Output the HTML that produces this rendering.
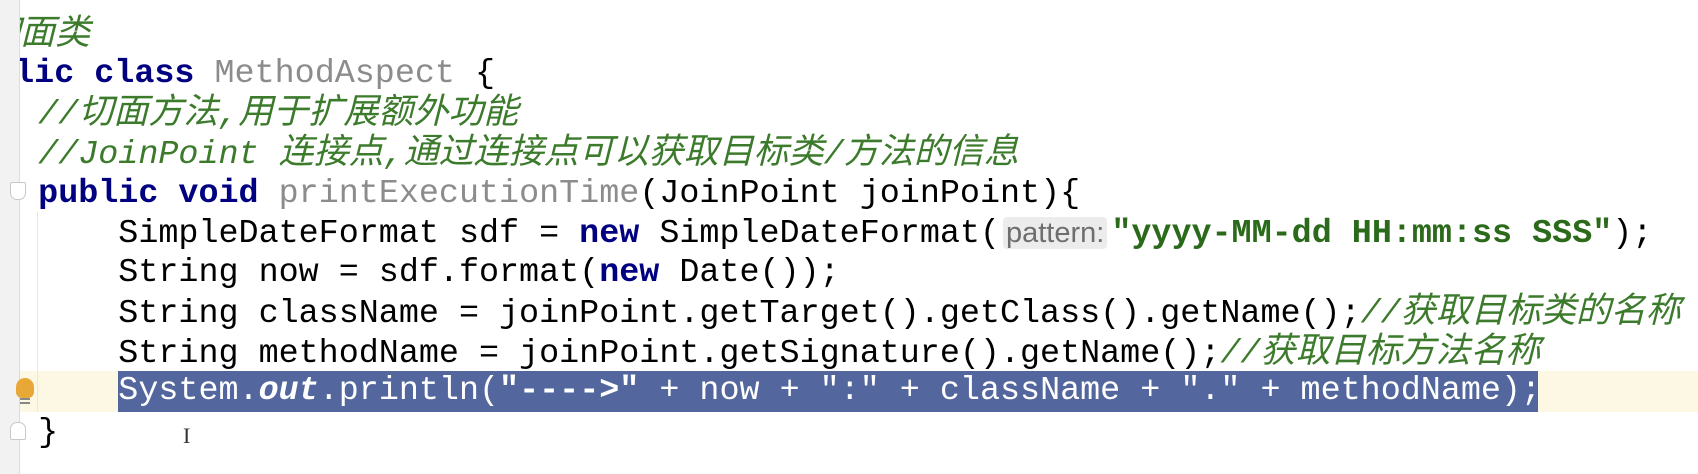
<!DOCTYPE html>
<html><head><meta charset="utf-8"><style>
body{margin:0;width:1698px;height:474px;background:#fff;overflow:hidden;position:relative;font-family:"Liberation Mono","Noto Sans CJK SC",monospace;font-size:33.4px;}
.gut{position:absolute;left:0;top:0;width:19px;height:474px;background:#f2f2f2;border-right:1px solid #dcdcdc;z-index:2}
.l{position:absolute;left:-42px;white-space:pre;height:40px;line-height:40px;color:#000;}
.k{color:#000080;font-weight:bold}
.c{color:#3c7a2c;font-style:italic}
.j{font-size:35px}
.s{color:#2a6a1a;font-weight:bold}
.g{color:#8c8c8c}
.h{font-family:"Liberation Sans",sans-serif;font-size:29px;color:#6e6e6e;background:#ececec;border-radius:4px;padding:0 3px;margin:0 4px 0 3px}
.cur{position:absolute;left:0;top:371px;width:1698px;height:41px;background:#fcf8e3}
.sel{position:absolute;left:118px;top:371px;width:1420px;height:41px;background:#53679e}
.ig{position:absolute;left:37px;top:212px;width:1px;height:200px;background:#e6e6e6}
.z{z-index:3}
</style></head><body>
<div class="cur"></div>
<div class="gut"></div>
<div class="ig"></div>
<div class="sel"></div>
<div class="l c" style="top:15px;left:-55px">//<span class="j">切面类</span></div>
<div class="l" style="top:54px;left:-46px"><span class="k">public class</span> <span class="g">MethodAspect</span> {</div>
<div class="l c" style="top:94px">    //<span class="j">切面方法</span>,<span class="j">用于扩展额外功能</span></div>
<div class="l c" style="top:134px">    //JoinPoint <span class="j">连接点</span>,<span class="j">通过连接点可以获取目标类</span>/<span class="j">方法的信息</span></div>
<div class="l" style="top:174px">    <span class="k">public void</span> <span class="g">printExecutionTime</span>(JoinPoint joinPoint){</div>
<div class="l" style="top:213px">        SimpleDateFormat sdf = <span class="k">new</span> SimpleDateFormat(<span class="h">pattern:</span><span class="s">"yyyy-MM-dd HH:mm:ss SSS"</span>);</div>
<div class="l" style="top:253px">        String now = sdf.format(<span class="k">new</span> Date());</div>
<div class="l" style="top:293px">        String className = joinPoint.getTarget().getClass().getName();<span class="c">//<span class="j">获取目标类的名称</span></span></div>
<div class="l" style="top:333px">        String methodName = joinPoint.getSignature().getName();<span class="c">//<span class="j">获取目标方法名称</span></span></div>
<div class="l" style="top:371px;color:#fff">        System.<b><i>out</i></b>.println(<b>"----&gt;"</b> + now + ":" + className + "." + methodName);</div>
<div class="l" style="top:413px">    }</div>
<div class="z" style="position:absolute;left:16px;top:378px;width:18px;height:20px;border-radius:9px 9px 6px 6px;background:#e8a838"></div>
<div class="z" style="position:absolute;left:20px;top:398px;width:10px;height:2px;background:#888"></div>
<div class="z" style="position:absolute;left:20px;top:402px;width:10px;height:2px;background:#888"></div>
<div class="z" style="position:absolute;left:10px;top:182px;width:14px;height:16px;border:1px solid #c8c8c8;background:#fff;border-radius:2px 2px 7px 7px"></div>
<div class="z" style="position:absolute;left:10px;top:422px;width:14px;height:16px;border:1px solid #c8c8c8;background:#fff;border-radius:7px 7px 2px 2px"></div>
<div style="position:absolute;left:183px;top:423px;font-family:'Liberation Serif',serif;font-size:22px;color:#333">I</div>
</body></html>
